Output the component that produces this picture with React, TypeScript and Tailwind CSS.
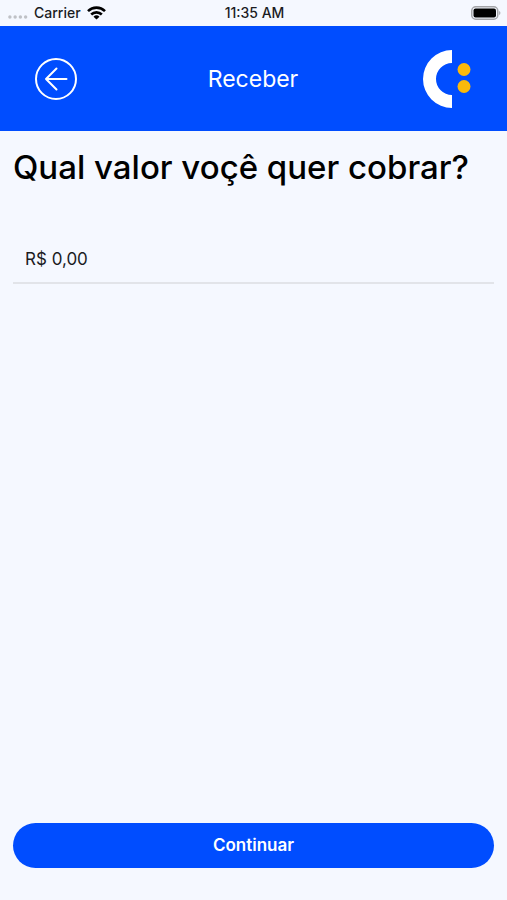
import { useState } from "react";

const StatusBar = () => (
  <div className="grid grid-cols-3 items-center h-[26px] pl-2 pr-1.5 text-sm leading-5 font-medium text-[#1b1c1f]">
    <div className="flex items-center gap-1.5">
      <svg width="20" height="6" viewBox="0 0 21 6" fill="#bfc1c6" className="mt-2" aria-hidden="true">
        <circle cx="2" cy="3" r="1.8" />
        <circle cx="7.5" cy="3" r="1.8" />
        <circle cx="13" cy="3" r="1.8" />
        <circle cx="18.5" cy="3" r="1.8" />
      </svg>
      <span>Carrier</span>
      <svg width="19" height="14" viewBox="0 0 19 14" fill="none" stroke="#000" strokeWidth="2.6" aria-hidden="true">
        <path d="M1 5.1a12.2 12.2 0 0 1 17 0" />
        <path d="M4.2 8.5a7.6 7.6 0 0 1 10.6 0" />
        <path d="M9.5 13.6 6.5 10.7a4.3 4.3 0 0 1 6 0z" fill="#000" stroke="none" />
      </svg>
    </div>
    <span className="text-center">11:35 AM</span>
    <svg width="30" height="14" viewBox="0 0 30 14" className="justify-self-end" aria-hidden="true">
      <rect x="0.75" y="0.75" width="26" height="12.5" rx="4" fill="none" stroke="#a3a4a8" strokeWidth="1.5" />
      <rect x="2.5" y="2.5" width="22.5" height="9" rx="2" fill="#000" />
      <path d="M28.2 5v4c1.6-.7 1.6-3.3 0-4z" fill="#a3a4a8" />
    </svg>
  </div>
);

const BackIcon = () => (
  <svg width="42" height="42" viewBox="0 0 42 42" fill="none" stroke="#fff" strokeWidth="2" strokeLinecap="round" strokeLinejoin="round" aria-hidden="true">
    <circle cx="21" cy="21" r="20" />
    <path d="M31.5 21H11M21.5 10.5 11 21l10.5 10.5" />
  </svg>
);

const Logo = () => (
  <svg width="48" height="58" viewBox="0 0 48 58" role="img" aria-label="Logo">
    <path d="M29 0v13a16 16 0 0 0 0 32v13a29 29 0 0 1 0-58z" fill="#fff" />
    <circle cx="41" cy="19.5" r="6.5" fill="#fbb90b" />
    <circle cx="41" cy="36.5" r="6.5" fill="#fbb90b" />
  </svg>
);

export default function App() {
  const [value, setValue] = useState("R$ 0,00");

  return (
    <div className="flex flex-col min-h-screen bg-[#f5f8ff] font-['Inter','Liberation_Sans',sans-serif] text-black">
      <StatusBar />

      <header className="grid grid-cols-3 items-center h-[105px] pl-[35px] pr-9 bg-[#004dff] text-white">
        <button type="button" aria-label="Voltar" className="justify-self-start">
          <BackIcon />
        </button>
        <h1 className="text-[23px] leading-8 text-center">Receber</h1>
        <div className="justify-self-end">
          <Logo />
        </div>
      </header>

      <form className="flex flex-col flex-1 px-[13px] pt-3 pb-8" onSubmit={(e) => e.preventDefault()}>
        <label htmlFor="valor" className="text-[33px] leading-[48px] font-medium">
          Qual valor voçê quer cobrar?
        </label>
        <input
          id="valor"
          type="text"
          inputMode="decimal"
          value={value}
          onChange={(e) => setValue(e.target.value)}
          className="mt-11 h-[49px] w-full px-3 border-b-2 border-[#e2e4e9] bg-transparent text-[17px] text-[#1b1c1f] outline-none"
        />
        <button type="submit" className="mt-auto h-[45px] w-full rounded-full bg-[#004dff] text-[17px] font-semibold text-white">
          Continuar
        </button>
      </form>
    </div>
  );
}
